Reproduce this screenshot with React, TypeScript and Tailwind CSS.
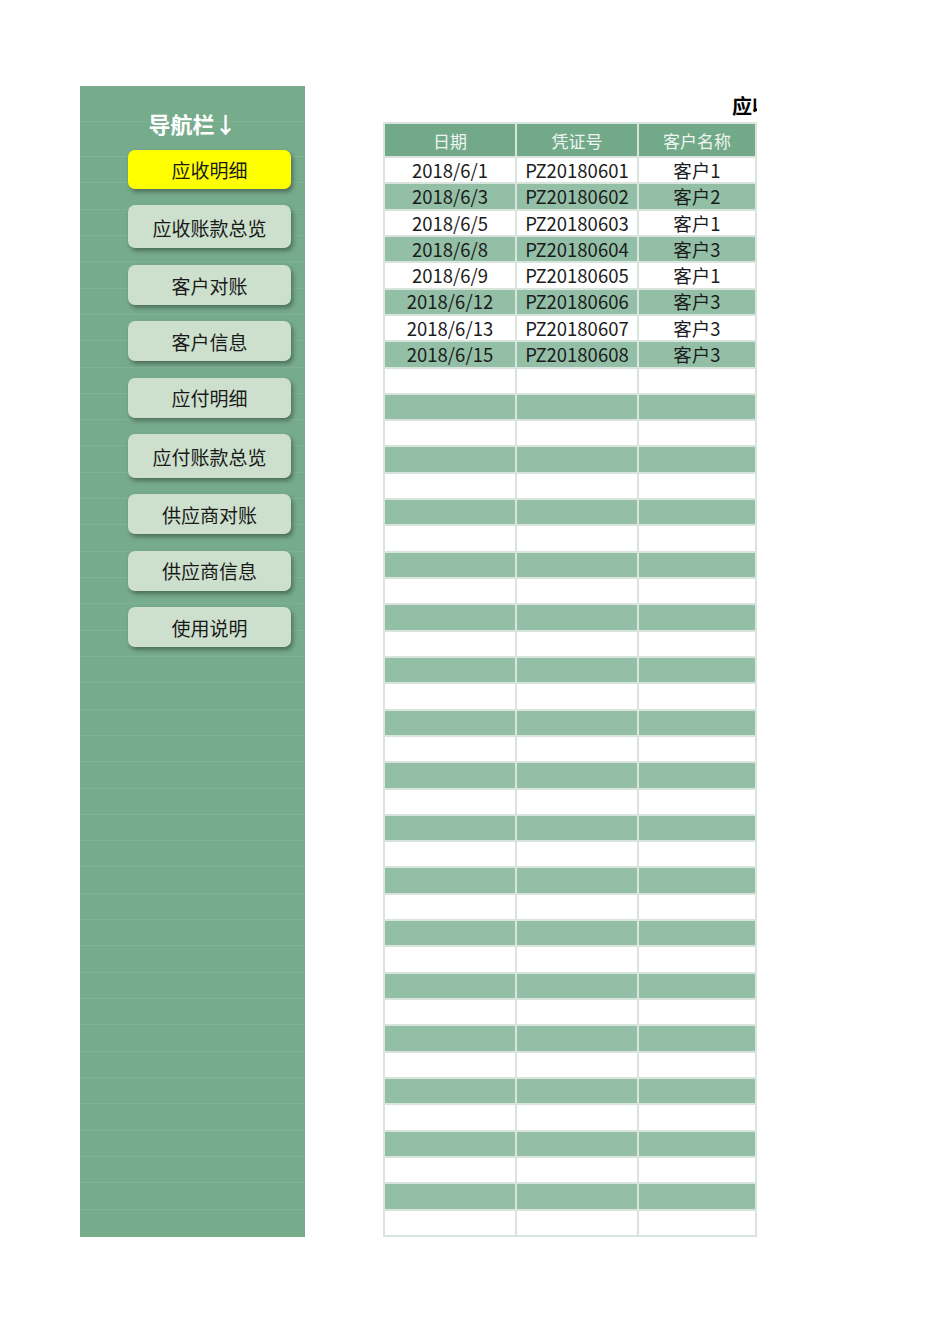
type NavButton = {
  label: string;
  height: string;
  active?: boolean;
};

type Entry = {
  date: string;
  voucher: string;
  customer: string;
};

const navButtons: NavButton[] = [
  { label: "应收明细", height: "h-[39px]", active: true },
  { label: "应收账款总览", height: "h-[43px]" },
  { label: "客户对账", height: "h-[40px]" },
  { label: "客户信息", height: "h-[40px]" },
  { label: "应付明细", height: "h-[40px]" },
  { label: "应付账款总览", height: "h-[44px]" },
  { label: "供应商对账", height: "h-[40px]" },
  { label: "供应商信息", height: "h-[40px]" },
  { label: "使用说明", height: "h-[40px]" },
];

const entries: Entry[] = [
  { date: "2018/6/1", voucher: "PZ20180601", customer: "客户1" },
  { date: "2018/6/3", voucher: "PZ20180602", customer: "客户2" },
  { date: "2018/6/5", voucher: "PZ20180603", customer: "客户1" },
  { date: "2018/6/8", voucher: "PZ20180604", customer: "客户3" },
  { date: "2018/6/9", voucher: "PZ20180605", customer: "客户1" },
  { date: "2018/6/12", voucher: "PZ20180606", customer: "客户3" },
  { date: "2018/6/13", voucher: "PZ20180607", customer: "客户3" },
  { date: "2018/6/15", voucher: "PZ20180608", customer: "客户3" },
];

const TOTAL_ROWS = 41;

const font = "font-['Noto_Sans_CJK_SC','Noto_Sans',sans-serif]";

export default function App() {
  const rows = Array.from({ length: TOTAL_ROWS }, (_, i) => entries[i] ?? null);

  return (
    <div className={`min-h-[1344px] w-[950px] bg-white pt-[86px] ${font}`}>
      <div className="flex">
        <Sidebar />
        <section className="ml-[78px] w-[374px]">
          {/* merged title cell, cut off by the sheet's print area */}
          <div className="h-[36px] overflow-hidden pt-[6px]">
            <p className="whitespace-nowrap pl-[349px] text-[20px] font-bold leading-[28px] text-black">
              应收明细
            </p>
          </div>
          <div className="border-l-2 border-t-2 border-[#d9e4dc]">
            <div className="grid h-[34px] grid-cols-[132px_122px_118px] bg-[#72a988] text-[17px] text-[#eef5f0]">
              <Cell>日期</Cell>
              <Cell>凭证号</Cell>
              <Cell>客户名称</Cell>
            </div>
            {rows.map((row, i) => (
              <div
                key={i}
                className={`grid h-[26.32px] grid-cols-[132px_122px_118px] text-[18.5px] text-[#1c1c1c] ${
                  i % 2 === 1 ? "bg-[#93bfa6]" : "bg-white"
                }`}
              >
                <Cell>{row?.date}</Cell>
                <Cell>{row?.voucher}</Cell>
                <Cell>{row?.customer}</Cell>
              </div>
            ))}
          </div>
        </section>
      </div>
    </div>
  );
}

function Sidebar() {
  return (
    <aside className="relative ml-[80px] h-[1151px] w-[225px] bg-[#76ab8c]">
      <div className="absolute inset-0 flex flex-col">
        <div className="h-[36px] shrink-0 border-b border-[#80b394]" />
        <div className="h-[35px] shrink-0 border-b border-[#80b394]" />
        {Array.from({ length: TOTAL_ROWS - 1 }, (_, i) => (
          <div key={i} className="h-[26.32px] shrink-0 border-b border-[#7fb293]" />
        ))}
      </div>
      <div className="relative flex flex-col">
        <h2 className="pt-[23px] text-center text-[22px] font-bold leading-[28px] text-white">
          导航栏↓
        </h2>
        <nav className="mt-[13px] flex flex-col gap-[16.4px] pl-[48px]">
          {navButtons.map((button) => (
            <div
              key={button.label}
              className={`flex w-[163px] items-center justify-center rounded-[7px] pt-[2px] text-[19px] text-[#1a1a1a] shadow-[2px_3px_4px_rgba(0,0,0,0.35)] ${button.height} ${
                button.active ? "bg-[#ffff00]" : "bg-[#cde0cd]"
              }`}
            >
              {button.label}
            </div>
          ))}
        </nav>
      </div>
    </aside>
  );
}

function Cell({ children }: { children?: React.ReactNode }) {
  return (
    <div className="flex items-center justify-center border-b-2 border-r-2 border-[#d9e4dc] leading-none">
      {children}
    </div>
  );
}
